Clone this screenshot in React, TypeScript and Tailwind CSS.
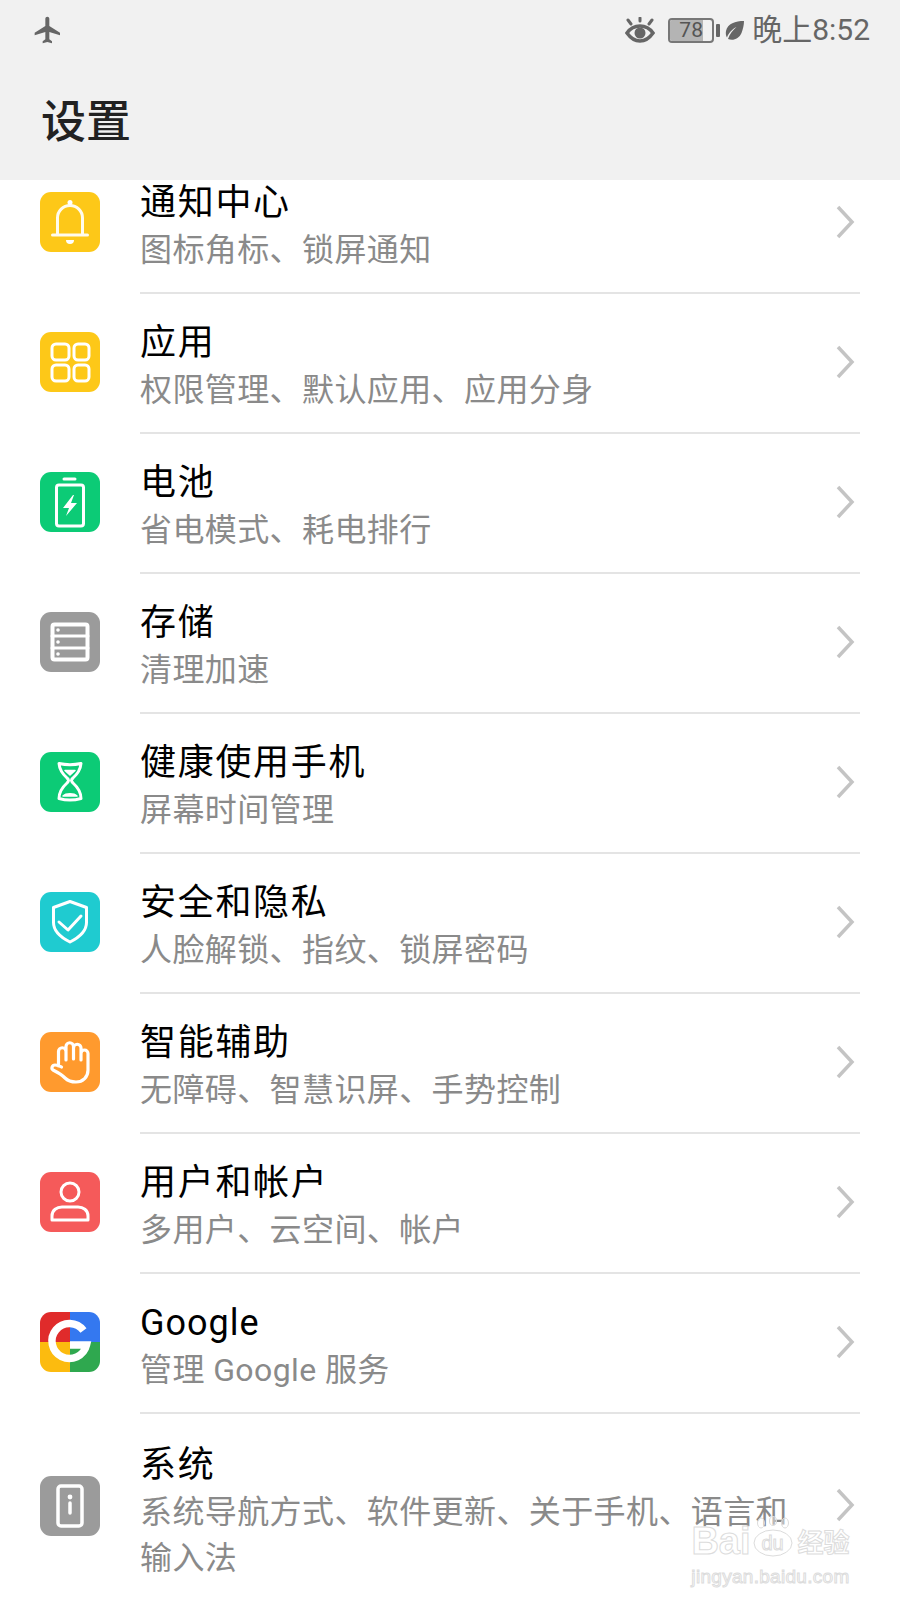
import type { ReactNode } from 'react';

const cjk = 'font-[Roboto,"Noto_Sans_CJK_SC",sans-serif]';

function Tile({ color, children }: { color: string; children: ReactNode }) {
  return (
    <div className={`w-[60px] h-[60px] shrink-0 mb-[4px] rounded-[11px] overflow-hidden ${color}`}>
      <svg width="60" height="60" viewBox="0 0 60 60" fill="none" stroke="#fff" strokeWidth="3" strokeLinecap="round" strokeLinejoin="round">
        {children}
      </svg>
    </div>
  );
}

const BellIcon = (
  <Tile color="bg-[#fdc818]">
    <path d="M12.500 43h35M17.500 43V26a12.500 12.500 0 0 1 25 0v17" strokeOpacity="0.92" />
    <circle cx="30" cy="10.5" r="2.5" fill="#fff" stroke="none" />
    <path d="M26 48h8a4 4 0 0 1-8 0z" fill="#fff" stroke="none" />
  </Tile>
);

const AppsIcon = (
  <Tile color="bg-[#fdc818]">
    <rect x="12" y="12" width="17" height="16" rx="4" />
    <rect x="34" y="12" width="15" height="16" rx="4" />
    <rect x="12" y="33" width="17" height="16" rx="4" />
    <rect x="34" y="33" width="15" height="16" rx="4" />
  </Tile>
);

const BatteryIcon = (
  <Tile color="bg-[#0ccb76]">
    <path d="M24 7h11" />
    <rect x="16.5" y="13" width="27" height="41" rx="2.5" />
    <path d="M33 23L23 36h6l-3 8 11-13h-6l3-8z" fill="#fff" stroke="none" />
  </Tile>
);

const StorageIcon = (
  <Tile color="bg-[#9b9b9b]">
    <rect x="12.500" y="12.500" width="35" height="35" rx="2" strokeWidth="4" />
    <path d="M12 24h36M12 36h36" />
    <circle cx="18" cy="18" r="1.800" fill="#fff" stroke="none" />
    <circle cx="18" cy="30" r="1.800" fill="#fff" stroke="none" />
    <circle cx="18" cy="42" r="1.800" fill="#fff" stroke="none" />
  </Tile>
);

const HourglassIcon = (
  <Tile color="bg-[#0ccb76]">
    <path d="M19 11.5c7 1.5 15 1.5 22 0-.5 6-3 10-8 14.5-2 1.700-2 3.300 0 5 5 4.500 8 9 8 15.500-7 2-15 2-22 0 0-6.500 3-11 8-15.500 2-1.700 2-3.300 0-5-5-4.500-7.500-8.500-8-14.500z" />
    <path d="M25 18.500h10l-5 4.500z" fill="#fff" stroke="#fff" strokeWidth="1.500" />
    <path d="M23 44c3-3 11-3 14 0z" fill="#fff" stroke="#fff" strokeWidth="1.500" />
  </Tile>
);

const ShieldIcon = (
  <Tile color="bg-[#1fcbd0]">
    <path d="M30 9.500l16.500 6v15c0 9-7.500 15-16.500 19.500C21 45.500 13.500 39.500 13.500 30.500v-15z" />
    <path d="M19 30l9 8 13-14" />
  </Tile>
);

const HandIcon = (
  <Tile color="bg-[#ff9a2e]">
    <path
      d="M18.500 34V19.500a3.750 3.750 0 0 1 7.500 0V28M26 19V14.500a3.750 3.750 0 0 1 7.500 0V27M33.500 16a3.750 3.750 0 0 1 7.500 0V28M41 21.500a3.500 3.500 0 0 1 7 0V38c0 7-5 12-12 12-5 0-8-1-11-4-3-3-8-6-12-8-2-1.500-1-5 2-5 3 0 5 1 6.500 2"
      strokeWidth="3.200"
    />
  </Tile>
);

const PersonIcon = (
  <Tile color="bg-[#f55a5a]">
    <circle cx="30" cy="20" r="9" />
    <path d="M12 48v-4c0-6 5-9 10-9h16c5 0 10 3 10 9v4z" />
  </Tile>
);

const GoogleIcon = (
  <div className="w-[60px] h-[60px] shrink-0 mb-[4px] rounded-[11px] overflow-hidden relative grid grid-cols-2 grid-rows-2">
    <div className="bg-[#e02b2b]" />
    <div className="bg-[#3478f0]" />
    <div className="bg-[#fcbb0f]" />
    <div className="bg-[#2fa84f]" />
    <svg className="absolute inset-0" width="60" height="60" viewBox="0 0 60 60" fill="none" stroke="#fff" strokeWidth="7.500">
      <path d="M43.500 18.500A17.500 17.500 0 1 0 46.500 33H30" />
    </svg>
  </div>
);

const SystemIcon = (
  <Tile color="bg-[#9b9b9b]">
    <rect x="18" y="10" width="24" height="40" rx="3" strokeWidth="3.500" />
    <circle cx="30" cy="21" r="2.400" fill="#fff" stroke="none" />
    <path d="M30 27v10" strokeWidth="3.500" />
  </Tile>
);

const rows = [
  { icon: BellIcon, title: '通知中心', sub: ['图标角标、锁屏通知'] },
  { icon: AppsIcon, title: '应用', sub: ['权限管理、默认应用、应用分身'] },
  { icon: BatteryIcon, title: '电池', sub: ['省电模式、耗电排行'] },
  { icon: StorageIcon, title: '存储', sub: ['清理加速'] },
  { icon: HourglassIcon, title: '健康使用手机', sub: ['屏幕时间管理'] },
  { icon: ShieldIcon, title: '安全和隐私', sub: ['人脸解锁、指纹、锁屏密码'] },
  { icon: HandIcon, title: '智能辅助', sub: ['无障碍、智慧识屏、手势控制'] },
  { icon: PersonIcon, title: '用户和帐户', sub: ['多用户、云空间、帐户'] },
  { icon: GoogleIcon, title: 'Google', sub: ['管理 Google 服务'] },
  { icon: SystemIcon, title: '系统', sub: ['系统导航方式、软件更新、关于手机、语言和', '输入法'] },
];

function Chevron({ tall }: { tall: boolean }) {
  return (
    <svg
      width="20"
      height="34"
      viewBox="0 0 20 34"
      fill="none"
      stroke="#c4c4c4"
      strokeWidth="3.500"
      className={tall ? 'shrink-0 mr-[5px] mb-[6px]' : 'shrink-0 mr-[5px] mb-[2px]'}
    >
      <path d="M3 2l14 15L3 32" />
    </svg>
  );
}

export default function App() {
  return (
    <div className={`w-[900px] h-[1600px] relative overflow-hidden bg-white flex flex-col ${cjk}`}>
      <header className="h-[180px] shrink-0 bg-[#f1f1f1] flex flex-col">
        <div className="h-[60px] flex items-center justify-between pl-[32px] pr-[30px] text-[#666]">
          <svg width="32" height="32" viewBox="0 0 24 24" fill="#666">
            <path d="M21 16v-2l-8-5V3.500c0-.83-.67-1.500-1.500-1.500S10 2.670 10 3.500V9l-8 5v2l8-2.500V19l-2 1.500V22l3.500-1 3.500 1v-1.500L13 19v-5.500l8 2.500z" />
          </svg>
          <div className="flex items-center">
            <svg width="30" height="26" viewBox="0 0 30 26" fill="none" stroke="#666" strokeWidth="3.500" strokeLinecap="round" className="mr-[13px]">
              <path d="M2 16c3.500-5 8-7 13-7s9.500 2 13 7c-3.500 5-8 8-13 8s-9.500-3-13-8z" />
              <circle cx="15" cy="16" r="5.500" fill="#666" stroke="none" />
              <path d="M3 3l3 4M27 3l-3 4M15 1v3" strokeWidth="3" />
            </svg>
            <div className="w-[46px] h-[25px] rounded-[4px] border-2 border-[#777] relative flex items-center justify-center overflow-hidden">
              <div className="absolute left-0 top-0 bottom-0 w-[78%] bg-[#b4b4b4]" />
              <span className="relative text-[21px] leading-none text-[#555]">78</span>
            </div>
            <div className="w-[4px] h-[13px] ml-[2px] bg-[#666] rounded-[1px]" />
            <svg width="21" height="21" viewBox="0 0 20 21" fill="#666" className="ml-[4px] mr-[7px]">
              <path d="M19.500 1C11 1 3 3.500 1.500 11c-.5 2.500 0 5 1 6.500C4 13 8 9 12 7c-3.500 3-7 7-8.500 12 5 2 11 0 13.500-6 1.500-4 2.500-8 2.500-12z" />
            </svg>
            <span className="text-[30px] leading-none text-[#666]">晚上8:52</span>
          </div>
        </div>
        <div className="flex-1 flex items-center pl-[41px]">
          <h1 className="text-[45px] font-medium leading-none text-[#222] mt-[4px]">设置</h1>
        </div>
      </header>

      <div className="flex-1 overflow-hidden">
        <div className="mt-[-26px]">
          {rows.map((r) => {
            const tall = r.sub.length > 1;
            return (
              <div key={r.title} className="flex items-center pl-[40px]">
                {r.icon}
                <div
                  className={
                    tall
                      ? 'flex-1 mx-[40px] h-[188px] flex items-center justify-between'
                      : 'flex-1 mx-[40px] h-[140px] flex items-center justify-between border-b-2 border-[#e4e4e4]'
                  }
                >
                  <div className={tall ? 'pt-[5px]' : 'pt-[5px]'}>
                    <div className={r.title === 'Google' ? 'text-[36px] tracking-[1px] leading-[48px] text-black' : 'text-[36px] tracking-[1.700px] leading-[48px] text-black'}>
                      {r.title}
                    </div>
                    {r.sub.map((s) => (
                      <div key={s} className="text-[32px] tracking-[0.400px] leading-[46px] text-[#8a8a8a]">{s}</div>
                    ))}
                  </div>
                  <Chevron tall={tall} />
                </div>
              </div>
            );
          })}
        </div>
      </div>

      <div className="absolute left-[688px] top-[1520px] w-[165px] flex flex-col items-center text-transparent font-['Liberation_Sans',sans-serif] [-webkit-text-stroke:1px_#dcdcdc]">
        <div className="flex items-center h-[42px]">
          <span className="text-[38px] leading-none font-bold">Bai</span>
          <div className="relative w-[42px] h-[34px] mx-[1px] flex items-center justify-center">
            <svg className="absolute left-0 top-[-8px]" width="42" height="42" viewBox="0 0 42 42" fill="rgba(255,255,255,0.4)" stroke="#dcdcdc">
              <ellipse cx="21" cy="27" rx="19" ry="13" />
              <ellipse cx="9" cy="7" rx="3.500" ry="5" />
              <ellipse cx="21" cy="5" rx="3.500" ry="4.500" />
              <ellipse cx="33" cy="7" rx="3.500" ry="5" />
            </svg>
            <span className="relative text-[20px] leading-none mt-[3px]">du</span>
          </div>
          <span className="text-[26px] leading-none ml-[3px] font-['Noto_Sans_CJK_SC',sans-serif] font-bold">经验</span>
        </div>
        <div className="text-[19px] leading-none mt-[5px] tracking-[0.3px]">jingyan.baidu.com</div>
      </div>
    </div>
  );
}
